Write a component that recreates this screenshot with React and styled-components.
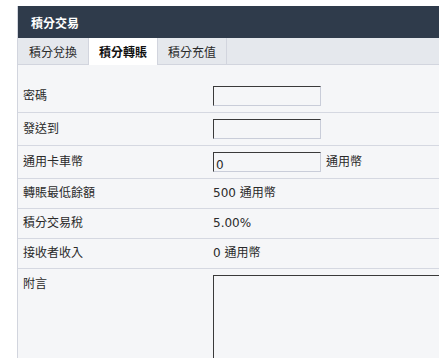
import React from "react";
import styled, { createGlobalStyle } from "styled-components";

const Global = createGlobalStyle`
  html, body { margin: 0; padding: 0; background: #fff; overflow: hidden; }
  body { font-family: "DejaVu Sans", "Noto Sans CJK TC", sans-serif; font-size: 12px; color: #2a2a2a; }
`;

const Wrap = styled.div`
  padding: 6px 0 0 17px;
`;

const Panel = styled.div`
  width: 560px;
  border-left: 1px solid #d2d5de;
  background: #f5f6f8;
`;

const Header = styled.div`
  height: 32px;
  background: #2f3b4b;
  color: #fff;
  font-weight: bold;
  display: flex;
  align-items: center;
  padding-left: 13px;
`;

const TabBar = styled.div`
  display: flex;
  height: 26px;
  background: #e5e8ed;
  border-bottom: 1px solid #d2d5de;
`;

const Tab = styled.div`
  display: flex;
  align-items: center;
  padding: 0 ${(p) => (p.$first ? "11px" : "10px")};
  border-right: 1px solid #d2d5de;
  background: ${(p) => (p.$active ? "#fff" : "transparent")};
  font-weight: ${(p) => (p.$active ? "bold" : "normal")};
  color: ${(p) => (p.$active ? "#111" : "#2a2a2a")};
  height: ${(p) => (p.$active ? "27px" : "26px")};
  margin-bottom: ${(p) => (p.$active ? "-1px" : "0")};
`;

const Body = styled.div`
  padding-top: 15px;
`;

const Row = styled.div`
  display: grid;
  grid-template-columns: 195px 1fr;
  border-bottom: ${(p) => (p.$last ? "none" : "1px solid #d5d8e1")};
  padding: 6px 0;
  align-items: ${(p) => (p.$top ? "start" : "center")};
`;

const Label = styled.div`
  padding-left: 5px;
  line-height: 17px;
  padding-top: ${(p) => (p.$top ? "1px" : "0")};
`;

const Value = styled.div`
  display: flex;
  align-items: center;
  gap: 5px;
  line-height: 17px;
`;

const Input = styled.input`
  box-sizing: border-box;
  width: 108px;
  height: 20px;
  margin: 0;
  border: 1px solid;
  border-color: #3a3a3a #c9cdd9 #c9cdd9 #3a3a3a;
  background: #f5f6f8;
  font-family: "DejaVu Sans", sans-serif;
  font-size: 12px;
  color: #2a2a2a;
  padding: 5px 2px 0;
  outline: none;
`;

const TextArea = styled.textarea`
  box-sizing: border-box;
  width: 300px;
  height: 110px;
  margin: 0;
  border: 1px solid;
  border-color: #3a3a3a #c9cdd9 #c9cdd9 #3a3a3a;
  background: #f5f6f8;
  resize: none;
  outline: none;
`;

export default function App() {
  return (
    <>
      <Global />
      <Wrap>
        <Panel>
          <Header>積分交易</Header>
          <TabBar>
            <Tab $first>積分兌換</Tab>
            <Tab $active>積分轉賬</Tab>
            <Tab>積分充值</Tab>
          </TabBar>
          <Body>
            <Row>
              <Label>密碼</Label>
              <Value><Input type="password" /></Value>
            </Row>
            <Row>
              <Label>發送到</Label>
              <Value><Input type="text" /></Value>
            </Row>
            <Row>
              <Label>通用卡車幣</Label>
              <Value><Input type="text" defaultValue="0" />通用幣</Value>
            </Row>
            <Row>
              <Label>轉賬最低餘額</Label>
              <Value>500 通用幣</Value>
            </Row>
            <Row>
              <Label>積分交易稅</Label>
              <Value>5.00%</Value>
            </Row>
            <Row>
              <Label>接收者收入</Label>
              <Value>0 通用幣</Value>
            </Row>
            <Row $last $top>
              <Label $top>附言</Label>
              <Value><TextArea /></Value>
            </Row>
          </Body>
        </Panel>
      </Wrap>
    </>
  );
}
